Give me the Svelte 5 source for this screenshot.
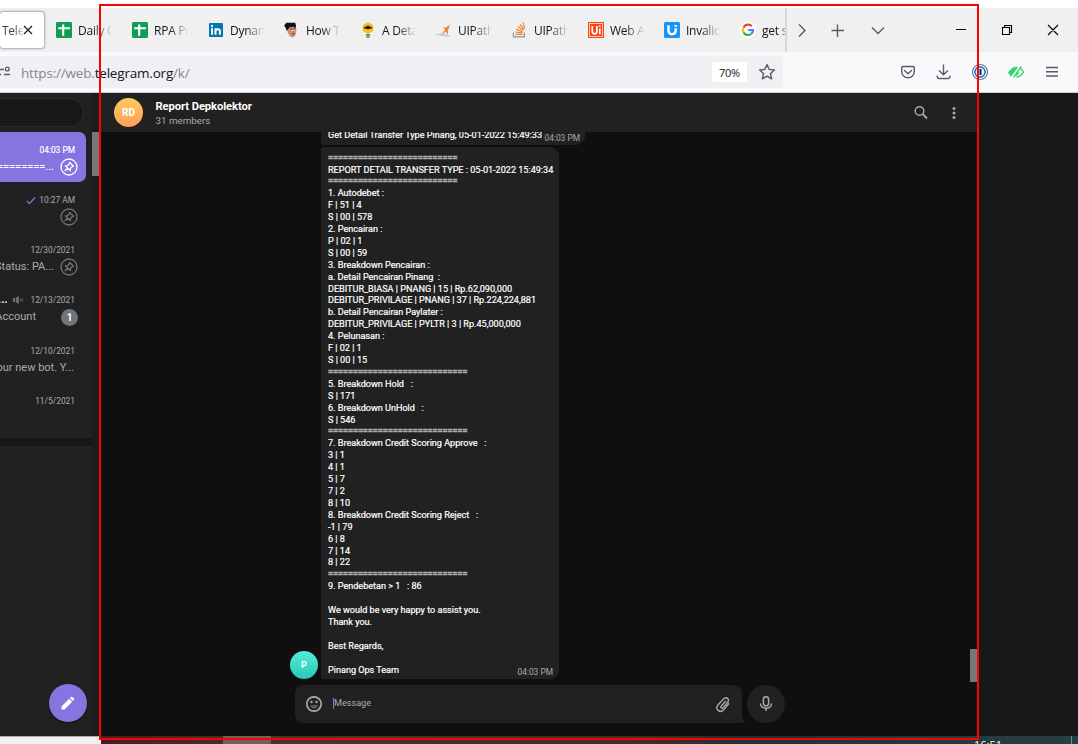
<script>
  const tabs = [
    { icon: 'sheet', label: 'Daily C' },
    { icon: 'sheet', label: 'RPA Pr' },
    { icon: 'linkedin', label: 'Dynam' },
    { icon: 'face', label: 'How T' },
    { icon: 'bee', label: 'A Deta' },
    { icon: 'runner', label: 'UIPath' },
    { icon: 'stack', label: 'UIPath' },
    { icon: 'uired', label: 'Web A' },
    { icon: 'uiblue', label: 'Invalid' },
    { icon: 'google', label: 'get s' }
  ];
  const chats = [
    { time: '04:03 PM', text: '=========...', pin: true, active: true },
    { time: '10:27 AM', text: '', pin: true, check: true },
    { time: '12/30/2021', text: 'Status: PA...', pin: true },
    { time: '12/13/2021', text: 'Account', badge: '1', muted: true },
    { time: '12/10/2021', text: 'our new bot. Y...' },
    { time: '11/5/2021', text: '' }
  ];
  const short = '='.repeat(26);
  const long = '='.repeat(28);
  const lines = [
    short,
    'REPORT DETAIL TRANSFER TYPE : 05-01-2022 15:49:34',
    short,
    '1. Autodebet :',
    'F | 51 | 4',
    'S | 00 | 578',
    '2. Pencairan :',
    'P | 02 | 1',
    'S | 00 | 59',
    '3. Breakdown Pencairan :',
    'a. Detail Pencairan Pinang  :',
    'DEBITUR_BIASA | PNANG | 15 | Rp.62,090,000',
    'DEBITUR_PRIVILAGE | PNANG | 37 | Rp.224,224,881',
    'b. Detail Pencairan Paylater :',
    'DEBITUR_PRIVILAGE | PYLTR | 3 | Rp.45,000,000',
    '4. Pelunasan :',
    'F | 02 | 1',
    'S | 00 | 15',
    long,
    '5. Breakdown Hold   :',
    'S | 171',
    '6. Breakdown UnHold   :',
    'S | 546',
    long,
    '7. Breakdown Credit Scoring Approve   :',
    '3 | 1',
    '4 | 1',
    '5 | 7',
    '7 | 2',
    '8 | 10',
    '8. Breakdown Credit Scoring Reject   :',
    '-1 | 79',
    '6 | 8',
    '7 | 14',
    '8 | 22',
    long,
    '9. Pendebetan > 1   : 86',
    '',
    'We would be very happy to assist you.',
    'Thank you.',
    '',
    'Best Regards,',
    '',
    'Pinang Ops Team'
  ];
</script>

<div class="screen">
  <div class="tabbar">
    <div class="current"><span class="fade">Tele</span>
      <svg width="10" height="10" viewBox="0 0 10 10"><path d="M1 1l8 8M9 1l-8 8" stroke="#222" stroke-width="1.3" /></svg>
    </div>
    <div class="tabs">
      {#each tabs as t, i}
        <div class="tab" class:last={i === 9}>
          <svg class="fav" width="16" height="16" viewBox="0 0 16 16">
            {#if t.icon === 'sheet'}
              <rect width="16" height="16" rx="1.2" fill="#0f9d58" />
              <path d="M2.3 6.2h11.6M7.2 2.5v11.2" stroke="#fff" stroke-width="2.1" />
            {:else if t.icon === 'linkedin'}
              <rect x="1" y="1" width="14" height="14" rx="1" fill="#0275b3" />
              <path d="M4 6.3v6.4M7.5 12.7V6.3M7.6 9.2c0-2.5 4.3-2.9 4.3 0v3.5" fill="none" stroke="#fff" stroke-width="2" />
              <circle cx="4" cy="4" r="1.2" fill="#fff" />
            {:else if t.icon === 'face'}
              <path d="M3.2 5l8-2.5 1.3 5-1.2 6-2.4 2-3-1.3-2.3-4z" fill="#c98c70" />
              <path d="M2.8 9L1.2 5 0 3.2 1.5 2 2 .8h9.2l.9 3.4-.8 1.5L8.800 4.800 6 5 4.400 6.800z" fill="#111" />
              <path d="M6.2 7h2M9.5 6.8h2.1M8 12l2.6-.5" stroke="#543" stroke-width="1" />
              <path d="M7 8.4h1.5M10 8.4h1" stroke="#fff" stroke-width=".8" />
            {:else if t.icon === 'bee'}
              <path d="M8 0l5 3v6l-5 3-5-3V3z" fill="#fcbf16" />
              <path d="M3 6.600C4.500 5 6.200 4.800 8 3.600c1.800 1.200 3.500 1.400 5 3-1.800-.4-3 0-5 .9-2-.9-3.200-1.300-5-.9z" fill="#1c1c1c" />
              <path d="M6 13h4M6.500 15h3" stroke="#686868" stroke-width="1.5" />
            {:else if t.icon === 'runner'}
              <path d="M0 12.500l6-.7 5 1 3 2-7-1.300z" fill="#c9c9e9" stroke="#c9c9e9" />
              <path d="M13.700.6l-.5 5.200-1.400 2 .2 5-2-3.300-4 3.300 3.100-5.200-2.100-2.400 3.300.6 1.300-1.700 1-.2z" fill="#f58220" />
            {:else if t.icon === 'stack'}
              <path d="M1.400 10.500v4.300h10.900v-4.300" fill="none" stroke="#8d9297" stroke-width="1.200" />
              <path d="M3.400 12.400h7M3.500 10l6.900.9M4.200 7.400l6.300 2.400M5.800 4.600l5.200 4M8.100 2.400l3.600 5.200M11.200.6l1.400 6" stroke="#f48024" stroke-width="1.200" />
            {:else if t.icon === 'uired'}
              <rect width="16" height="16" fill="#fa4616" />
              <rect x="1.5" y="1.5" width="13" height="13" fill="none" stroke="#fff" stroke-width=".7" />
              <path d="M4.300 4v5.300c0 3.500 4.600 3.500 4.600 0V4M11.800 6.500v5.800M11.800 3.600v1.500" fill="none" stroke="#fff" stroke-width="1.700" />
            {:else if t.icon === 'uiblue'}
              <rect width="16" height="16" rx="1.5" fill="#1697f4" />
              <path d="M4.500 3.200v5.600c0 4.800 7.200 4.300 7.200-.3V6.300M11.700 3v1.800" fill="none" stroke="#fff" stroke-width="2.400" />
            {:else}
              <circle cx="8" cy="8" r="8" fill="#fff" />
              <path d="M11.700 4.100A5.100 5.100 0 0 0 3.600 5.400" fill="none" stroke="#ea4335" stroke-width="2.200" />
              <path d="M3.600 5.400a5 5 0 0 0 0 5.200" fill="none" stroke="#fbbc05" stroke-width="2.200" />
              <path d="M3.600 10.600a5.100 5.100 0 0 0 7.700 1.100" fill="none" stroke="#34a853" stroke-width="2.200" />
              <path d="M11.300 11.700A4.800 4.800 0 0 0 13 8H8.200" fill="none" stroke="#4285f4" stroke-width="2.200" />
            {/if}
          </svg>
          <span class="fade">{t.label}</span>
        </div>
      {/each}
    </div>
    <div class="tabtools">
      <svg width="275" height="44" viewBox="803 8 275 44" fill="none">
        <path d="M799 24.5l6 6-6 6" stroke="#5b5b66" stroke-width="1.400" />
        <path d="M831.500 30.500h12.500M837.500 24.500v12.500M872 27.500l6 6 6-6" stroke="#5b5b66" stroke-width="1.400" />
        <path d="M956 29.500h10M1002.500 27.500h7v7h-7zM1004.500 27.500v-2h7v7h-2M1048 25l10 10M1058 25l-10 10" stroke="#000" stroke-width="1.100" />
      </svg>
    </div>
  </div>

  <div class="toolbar">
    <div class="url">
      <svg width="12" height="14" viewBox="0 0 12 14" fill="none" stroke="#5b5b66" stroke-width="1.300"><path d="M0 4.500h4M0 9.500h1M4 9.500h6" /><circle cx="7.300" cy="4" r="1.900" /></svg>
      <span class="address">https://web.<b>telegram.org</b>/k/</span>
      <span class="zoom">70%</span>
      <svg class="star" width="18" height="18" viewBox="0 0 18 18"><path d="M9 1.500l2.200 4.900 5.200.6-3.900 3.500 1.100 5.300L9 13.200l-4.600 2.600 1.100-5.300L1.600 7l5.200-.6z" fill="none" stroke="#5b5b66" stroke-width="1.400" stroke-linejoin="round" /></svg>
    </div>
    <svg class="actions" width="178" height="24" viewBox="890 60 178 24" fill="none" stroke="#5b5b66" stroke-width="1.400">
      <path d="M903.200 66.500h9.600q1.500 0 1.500 1.500v3.500a6.300 6.300 0 0 1-12.600 0V68q0-1.500 1.500-1.500zM904.500 70.500l3.500 3.200 3.500-3.200" stroke-linecap="round" />
      <path d="M943.500 64.500v10M939 70.500l4.500 4.300 4.500-4.300M937.300 75.500v1q0 2 2 2h8.600q2 0 2-2v-1" />
      <circle cx="980" cy="72" r="7.500" fill="#fff" stroke="#777" stroke-width="1.200" />
      <circle cx="980" cy="72" r="5" stroke="#1487f4" stroke-width="1.800" />
      <path d="M980.500 69v6" stroke="#222" stroke-width="2" />
      <path d="M1008.500 72.300q4.500-6 9-5l-6.500 8.800q-1.500-1.400-2.500-3.800z" fill="#2bd96b" stroke="#2bd96b" stroke-width="1" />
      <path d="M1020.500 68.600q2 1.500 3 3.500-2.500 4.300-7 4.900M1021.300 66.500l-7.800 10.800M1018.500 72.500l-2.500 3" stroke="#2bd96b" stroke-width="1.300" />
      <path d="M1046 67.500h12M1046 71.700h12M1046 76h12" />
    </svg>
  </div>

  <div class="app">
    <aside>
      <div class="searchrow"><div class="search"></div></div>
      {#each chats as c}
        <div class="chat" class:active={c.active}>
          <div class="when">
            {#if c.check}<svg width="10" height="9" viewBox="0 0 10 9"><path d="M1 5l2.500 2.600L9 1.500" fill="none" stroke="#8774e1" stroke-width="1.300" /></svg>{/if}
            {#if c.muted}<span class="dots"><i>.</i>..</span><svg class="mute" width="11" height="8" viewBox="0 0 11 8"><path d="M0 2h2v4H0zM2.800 1.800L5.800 0v8L2.800 6.200z" fill="#687078" /><path d="M7 2.500l3 3M10 2.500l-3 3" stroke="#687078" /></svg>{/if}
            <span>{c.time}</span>
          </div>
          <div class="what">
            <span class:wide={!c.pin && !c.badge}>{c.text}</span>
            {#if c.pin}
              <svg class="pin" width="18" height="18" viewBox="0 0 18 18" fill="none" stroke="currentColor"><circle cx="9" cy="9" r="8" stroke-width="1.300" /><path d="M9.700 4.500l3.800 3.700-1.300.4-1.800 1.900-.1 2.100-4.900-4.800 2.200-.2 1.800-1.800zM7.600 10.200L4.800 13" stroke-width="1.300" stroke-linejoin="round" /></svg>
            {/if}
            {#if c.badge}<span class="badge">{c.badge}</span>{/if}
          </div>
        </div>
      {/each}
      <div class="divider"></div>
      <div class="compose">
        <svg width="16" height="16" viewBox="0 0 16 16" fill="#fff"><path d="M1.500 11.500l7.700-7.700 3 3-7.700 7.700h-3zM10 3l1-1q.8-.6 1.500 0l1.500 1.500q.6.700 0 1.500l-1 1z" /></svg>
      </div>
    </aside>
    <div class="track"><div></div></div>

    <main>
      <header>
        <div class="avatar rd">RD</div>
        <div class="title"><strong>Report Depkolektor</strong><span>31 members</span></div>
        <svg width="50" height="20" viewBox="0 0 50 20" fill="none" stroke="#aaa"><circle cx="7.500" cy="8" r="4.300" stroke-width="1.500" /><path d="M10.700 11.200l4.300 4.300" stroke-width="1.800" /><g fill="#aaa" stroke="none"><circle cx="42" cy="5.500" r="1.500" /><circle cx="42" cy="10" r="1.500" /><circle cx="42" cy="14.500" r="1.500" /></g></svg>
      </header>
      <section>
        <div class="messages">
          <div class="bubble first"><span>Get Detail Transfer Type Pinang, 05-01-2022 15:49:33</span><time>04:03 PM</time></div>
          <div class="sender">
            <div class="avatar p">P</div>
            <div class="bubble report">
              <div class="lines">
                {#each lines as line}<div class="line" class:rule={line.startsWith('==')}>{line}</div>{/each}
              </div>
              <time>04:03 PM</time>
            </div>
          </div>
          <div class="inputrow">
            <div class="input">
              <svg width="18" height="18" viewBox="0 0 18 18" fill="none" stroke="#aaa" stroke-width="1.700"><circle cx="9" cy="9" r="7.200" /><path d="M5 10.500q4 5.300 8 0z" fill="#aaa" stroke="none" /><path d="M6.300 10.800q2.700 2.500 5.400 0" stroke="#212121" stroke-width="1" /><circle cx="6.500" cy="7" r="1.200" fill="#aaa" stroke="none" /><circle cx="11.500" cy="7" r="1.200" fill="#aaa" stroke="none" /></svg>
              <span class="placeholder">Message</span>
              <svg class="clip" width="16" height="18" viewBox="0 0 16 18" fill="none" stroke="#aaa" stroke-width="1.400" stroke-linecap="round"><path d="M10.500 6.200l-4.300 4.900c-1.200 1.500.7 2.900 1.900 1.500l4.600-5.300c2.500-3-1.600-6.300-4.200-3.400L3 10c-3.400 4.100 2 8.700 5.600 4.700l5.100-5.900" /></svg>
              <svg class="tail" width="5" height="8" viewBox="0 0 5 8"><path d="M0 0q0 5 4 7.500H0z" fill="#212121" /></svg>
            </div>
            <div class="mic"><svg width="14" height="18" viewBox="0 0 14 18" fill="none" stroke="#aaa" stroke-width="1.500"><rect x="4.400" y="1.800" width="5.200" height="9" rx="2.600" /><path d="M1.500 8.500c0 6.300 11 6.300 11 0M7 13v3" /></svg></div>
          </div>
        </div>
        <div class="thumb"></div>
      </section>
    </main>
    <div class="right"></div>
  </div>

  <div class="bottom"><div class="edge"></div><div class="taskbar"><div class="task"></div><span>16:51</span><i></i></div></div>
  <div class="frame"></div>
</div>

<style>
  :global(body) { margin: 0; overflow: hidden; background: #fff; }
  * { box-sizing: border-box; }
  svg { display: block; flex: none; }
  .screen { position: relative; width: 1078px; height: 744px; overflow: hidden; padding-top: 8px; display: flex; flex-direction: column; font-family: Roboto, sans-serif; }
  .tabbar { height: 44px; flex: none; background: #f0f0f0; display: flex; font: 12px "Open Sans", sans-serif; color: #15141a; }
  .current { width: 46px; height: 38px; margin-top: 3px; margin-left: -1px; background: #fff; border: 1px solid #bbb; border-radius: 4px; box-shadow: 0 0 2px #aaa; display: flex; align-items: center; padding-left: 2px; flex: none; }
  .current .fade { width: 21px; overflow: hidden; color: #444; mask-image: linear-gradient(90deg, #000 60%, #0003 100%); }
  .fade { white-space: nowrap; letter-spacing: -.25px; mask-image: linear-gradient(90deg, #000 45%, #0002 95%, transparent 100%); }
  .tabs { display: flex; padding-left: 11px; width: 742px; overflow: hidden; border-right: 2px solid #d8d8d8; flex: none; }
  .tab { width: 76px; flex: none; display: flex; align-items: center; gap: 6px; }
  .tab .fade { width: 34px; overflow: hidden; }
  .tab.last .fade { mask-image: linear-gradient(90deg, #000 60%, #0006 90%); width: 26px; }
  .tabtools { flex: 1; padding-left: 16px; }
  .tabtools svg { overflow: visible; }
  .toolbar { height: 41px; flex: none; background: #f9f9fb; border-bottom: 1px solid #ccc; display: flex; align-items: center; }
  .url { width: 783px; height: 32px; background: #f0f0f4; border-radius: 0 4px 4px 0; display: flex; align-items: center; margin-right: 107px; }
  .address { flex: 1; margin-left: 9px; padding-top: 1px; font: 13.500px "Open Sans", sans-serif; letter-spacing: -.19px; color: #86868c; }
  .address b { color: #15141a; font-weight: 400; }
  .zoom { width: 35px; height: 20px; line-height: 21px; background: #fff; border-radius: 3px; font-family: "Open Sans", sans-serif; font-size: 11px; letter-spacing: -.3px; text-align: center; margin-right: 11px; color: #15141a; }
  .star { margin-right: 7px; }
  .app { height: 643px; flex: none; display: flex; background: #0f0f0f; }
  aside { width: 92px; background: #212121; position: relative; overflow: hidden; flex: none; }
  .searchrow { height: 39px; padding-top: 5px; }
  .search { width: 104px; height: 29px; margin-left: -20px; border: 1px solid #2b2b2b; border-radius: 15px; background: #181818; }
  .chat { height: 50.200px; width: 86px; padding: 11px 11px 0 0; color: #aaa; font-size: 8.400px; }
  .chat.active { height: 50px; background: #8774e1; border-radius: 0 7px 7px 0; color: #fff; -webkit-text-stroke: .15px; }
  .when { height: 14px; line-height: 14px; display: flex; align-items: center; justify-content: flex-end; gap: 3px; white-space: nowrap; }
  .dots { color: #fff; font-weight: 700; font-size: 10px; margin-right: 3px; }
  .dots i { color: #e33; font-style: normal; }
  .mute { margin-right: 3px; }
  .what { display: flex; height: 20px; align-items: center; justify-content: space-between; font-size: 11px; white-space: nowrap; margin-right: -3px; }
  .what > span:first-child { width: 56px; margin-left: -2px; height: 18px; line-height: 17px; display: flex; justify-content: flex-end; }
  .chat:nth-child(5) .what > span:first-child { width: 38px; }
  .what .wide { width: 76px !important; }
  .pin { color: #737373; }
  .active .pin { color: #fff; }
  .badge { width: 17px; height: 17px; line-height: 17px; text-align: center; border-radius: 50%; background: #707579; color: #fff; font-weight: 700; font-size: 10px; margin-top: 1px; }
  .divider { height: 8px; background: #181818; margin-top: 5px; }
  .compose { position: absolute; left: 49px; bottom: 14px; width: 38px; height: 38px; border-radius: 50%; background: #8774e1; display: grid; place-items: center; box-shadow: 0 1px 3px #0006; }
  .track { width: 9px; background: #1c1c1f; padding-top: 39px; flex: none; }
  .track div { height: 44px; background: #777; }
  main { width: 877px; display: flex; flex-direction: column; background: #0f0f0f; flex: none; }
  header { height: 39px; flex: none; background: #212121; display: flex; align-items: center; padding: 0 16px 0 13px; }
  .avatar { border-radius: 50%; color: #fff; font-weight: 700; display: grid; place-items: center; flex: none; }
  .rd { width: 29px; height: 29px; background: linear-gradient(#ffca62, #ff9e59); font-size: 10px; }
  .title { flex: 1; margin-left: 12.500px; padding-top: 3px; display: flex; flex-direction: column; gap: 0; color: #fff; }
  .title strong { font-size: 11.200px; line-height: 14px; font-weight: 700; letter-spacing: -.08px; }
  .title span { font-size: 9.800px; line-height: 14px; color: #aaa; }
  section { flex: 1; min-height: 0; display: flex; justify-content: space-between; overflow: hidden; }
  .messages { width: 500px; margin-left: 189px; }
  .bubble { background: #212121; color: #fff; font-size: 9.100px; }
  .first { margin-left: 31px; width: 264px; height: 13px; border-radius: 0 0 9px 3px; display: flex; padding: 0 5px 0 7px; justify-content: space-between; white-space: nowrap; }
  .first span { line-height: 12px; margin-top: -3px; -webkit-text-stroke: .2px #fff; }
  time { font-size: 8.400px; color: #aaa; line-height: 10px; white-space: nowrap; }
  .first time { margin-top: 1px; }
  .sender { display: flex; align-items: flex-end; gap: 3px; margin-top: 2px; }
  .p { width: 28px; height: 28px; background: linear-gradient(#53edd6, #28c9b7); font-size: 9px; }
  .report { width: 238px; height: 532px; border-radius: 4px 9px 9px 0; padding: 5.600px 6px 2px 7px; display: flex; justify-content: space-between; align-items: flex-end; }
  .lines { width: 0; height: 524px; align-self: flex-start; -webkit-text-stroke: .2px #fff; letter-spacing: -.01px; }
  .line { height: 11.910px; line-height: 11.910px; white-space: pre; }
  .rule { color: #aaa; -webkit-text-stroke: .7px #aaa; }
  .inputrow { display: flex; gap: 5px; margin: 6px 0 0 5px; }
  .input { position: relative; width: 447px; height: 38px; border-radius: 8px 8px 0 8px; background: #212121; display: flex; align-items: center; padding: 0 11px 0 10px; }
  .placeholder { flex: 1; margin-left: 10px; border-left: 1px solid #8774e1; font-size: 9.100px; line-height: 11px; margin-top: -1px; color: #aaa; }
  .tail { position: absolute; right: -5px; bottom: 0; }
  .mic { width: 38px; height: 38px; border-radius: 50%; background: #212121; display: grid; place-items: center; }
  .thumb { width: 8px; height: 33px; margin-top: 517px; background: #777; }
  .right { flex: 1; background: #181818; }
  .bottom { height: 8px; display: flex; }
  .edge { width: 101px; background: #f1f1f1; border-top: 1px solid #aaa; }
  .taskbar { flex: 1; background: linear-gradient(90deg, #421e23, #49342c 20%, #442b26 55%, #1e3034 66%, #263f43); display: flex; overflow: hidden; color: #fff; font: 11px/14px "Open Sans", sans-serif; }
  .task { width: 48px; margin-left: 122px; background: #735f58; }
  .taskbar span { margin-left: 703px; margin-top: 2px; }
  .taskbar i { border-left: 1px solid #789; margin-left: auto; margin-right: 6px; }
  .frame { position: absolute; left: 99px; top: 4px; width: 880px; height: 736px; border: 2px solid #f00; }
</style>
